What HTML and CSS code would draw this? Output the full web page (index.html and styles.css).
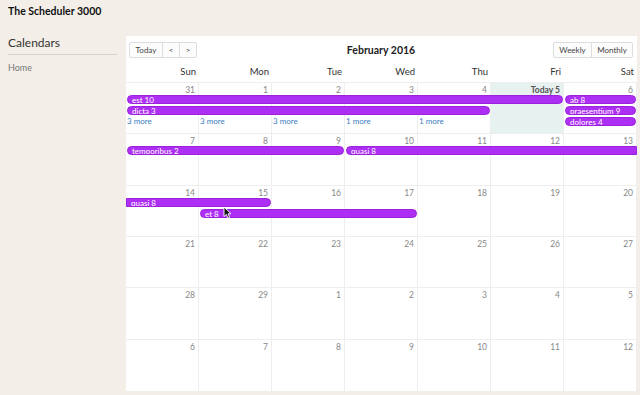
FILE: index.html
```html
<!DOCTYPE html>
<html lang="en">
<head>
    <meta charset="UTF-8">
    <title>The Scheduler 3000</title>
    <link rel="stylesheet" href="styles.css">
</head>
<body>

<header class="app-title">The Scheduler 3000</header>

<div class="layout">
    <aside class="sidebar">
        <h2>Calendars</h2>
        <a href="#">Home</a>
    </aside>

    <section class="calendar">
        <div class="toolbar">
            <div class="btn-group">
                <button class="btn btn-today">Today</button>
                <button class="btn btn-arrow">&lt;</button>
                <button class="btn btn-arrow">&gt;</button>
            </div>
            <h3 class="month-title">February 2016</h3>
            <div class="btn-group right">
                <button class="btn btn-weekly">Weekly</button>
                <button class="btn btn-monthly">Monthly</button>
            </div>
        </div>

        <div class="day-names">
            <span>Sun</span><span>Mon</span><span>Tue</span><span>Wed</span><span>Thu</span><span>Fri</span><span>Sat</span>
        </div>

        <div class="weeks">
            <div class="week">
                <div class="day c1">31</div>
                <div class="day c2">1</div>
                <div class="day c3">2</div>
                <div class="day c4">3</div>
                <div class="day c5">4</div>
                <div class="day c6 today">Today 5</div>
                <div class="day c7">6</div>
                <div class="event r2" style="grid-column: 1 / 7">est 10</div>
                <div class="event r2" style="grid-column: 7 / 8">ab 8</div>
                <div class="event r3" style="grid-column: 1 / 6">dicta 3</div>
                <div class="event r3" style="grid-column: 7 / 8">praesentium 9</div>
                <div class="event r4" style="grid-column: 7 / 8">dolores 4</div>
                <a href="#" class="more c1">3 more</a>
                <a href="#" class="more c2">3 more</a>
                <a href="#" class="more c3">3 more</a>
                <a href="#" class="more c4">1 more</a>
                <a href="#" class="more c5">1 more</a>
            </div>

            <div class="week">
                <div class="day c1">7</div>
                <div class="day c2">8</div>
                <div class="day c3">9</div>
                <div class="day c4">10</div>
                <div class="day c5">11</div>
                <div class="day c6">12</div>
                <div class="day c7">13</div>
                <div class="event r2" style="grid-column: 1 / 4">temporibus 2</div>
                <div class="event r2 cont-right" style="grid-column: 4 / 8">quasi 8</div>
            </div>

            <div class="week">
                <div class="day c1">14</div>
                <div class="day c2">15</div>
                <div class="day c3">16</div>
                <div class="day c4">17</div>
                <div class="day c5">18</div>
                <div class="day c6">19</div>
                <div class="day c7">20</div>
                <div class="event r2 cont-left" style="grid-column: 1 / 3">quasi 8</div>
                <div class="event r3" style="grid-column: 2 / 5">et 8</div>
                <svg class="cursor" width="9" height="13" viewBox="0 0 9 13">
                    <path d="M1 1 L1 10.5 L3.3 8.4 L5 12 L6.6 11.3 L5 7.8 L8 7.8 Z" fill="#111" stroke="#fff" stroke-width="0.9"/>
                </svg>
            </div>

            <div class="week">
                <div class="day c1">21</div>
                <div class="day c2">22</div>
                <div class="day c3">23</div>
                <div class="day c4">24</div>
                <div class="day c5">25</div>
                <div class="day c6">26</div>
                <div class="day c7">27</div>
            </div>

            <div class="week">
                <div class="day c1">28</div>
                <div class="day c2">29</div>
                <div class="day c3">1</div>
                <div class="day c4">2</div>
                <div class="day c5">3</div>
                <div class="day c6">4</div>
                <div class="day c7">5</div>
            </div>

            <div class="week">
                <div class="day c1">6</div>
                <div class="day c2">7</div>
                <div class="day c3">8</div>
                <div class="day c4">9</div>
                <div class="day c5">10</div>
                <div class="day c6">11</div>
                <div class="day c7">12</div>
            </div>
        </div>
    </section>
</div>

</body>
</html>
```

FILE: styles.css
```css
body { font-family: Lato, "Open Sans", sans-serif; background-color: #f3efe8; margin: 0; padding: 0; color: #222; }

.app-title { font-weight: bold; font-size: 10.5px; padding: 5px 8px 0; height: 30px; box-sizing: border-box; color: #111; }

.layout { display: flex; }
.sidebar { width: 109px; padding: 0 9px 0 8px; }
.sidebar h2 { font-size: 12px; font-weight: normal; margin: 0; padding: 5px 0 4px; border-bottom: 1px solid #d8d3cc; color: #333; }
.sidebar a { display: block; margin-top: 7px; font-size: 9px; color: #777; text-decoration: none; }

.calendar { width: 511px; height: 355px; margin-top: 6px; background-color: white; display: flex; flex-direction: column; }

.toolbar { display: grid; grid-template-columns: 1fr auto 1fr; align-items: center; padding: 6px 4px 0 3px; margin-bottom: 6px; }
.btn-group { display: flex; }
.btn-group.right { justify-content: flex-end; }
.btn { font-family: inherit; font-size: 8px; color: #444; background-color: #fcfcfc; border: 1px solid #ddd; height: 16px; padding: 0; margin: 0; margin-left: -1px; }
.btn:first-child { margin-left: 0; border-radius: 2px 0 0 2px; }
.btn:last-child { border-radius: 0 2px 2px 0; }
.btn-today { width: 34px; }
.btn-arrow { width: 18px; }
.btn-weekly { width: 39px; }
.btn-monthly { width: 42px; }
.month-title { margin: 0; font-size: 10.5px; font-weight: bold; color: #222; }

.day-names { display: grid; grid-template-columns: repeat(7, 73px); height: 18px; border-bottom: 1px solid #eee; }
.day-names span { text-align: right; padding-right: 3px; font-size: 9.5px; line-height: 16px; color: #333; }

.weeks { flex: 1; display: grid; grid-template-rows: repeat(6, 1fr); }
.week { position: relative; display: grid; grid-template-columns: repeat(7, 73px); grid-template-rows: 12px 11px 11px 11px 1fr; border-bottom: 1px solid #eee; }
.week:last-child { border-bottom: none; }

.day { grid-row: 1 / -1; border-right: 1px solid #eee; text-align: right; padding: 2px 3px 0 0; font-size: 8.5px; color: #888; line-height: 10px; }
.day.today { background-color: #e7f1ef; font-weight: bold; color: #555; }
.c1 { grid-column: 1; }
.c2 { grid-column: 2; }
.c3 { grid-column: 3; }
.c4 { grid-column: 4; }
.c5 { grid-column: 5; }
.c6 { grid-column: 6; }
.c7 { grid-column: 7; }

.event { align-self: start; height: 9px; margin: 0 1px; padding-left: 4px; background-color: #ae2ff4; border: 1px solid #9b22dc; border-radius: 5px; color: white; font-size: 8px; line-height: 8px; white-space: nowrap; overflow: hidden; box-sizing: border-box; }
.event.r2 { grid-row: 2; }
.event.r3 { grid-row: 3; }
.event.r4 { grid-row: 4; }
.event.cont-right { margin-right: 0; border-radius: 5px 0 0 5px; }
.event.cont-left { margin-left: 0; border-radius: 0 5px 5px 0; }

.more { grid-row: 4; align-self: start; font-size: 8px; line-height: 9px; color: #3b7cc2; text-decoration: none; padding-left: 1px; }

.cursor { position: absolute; left: 97px; top: 20px; }
```
